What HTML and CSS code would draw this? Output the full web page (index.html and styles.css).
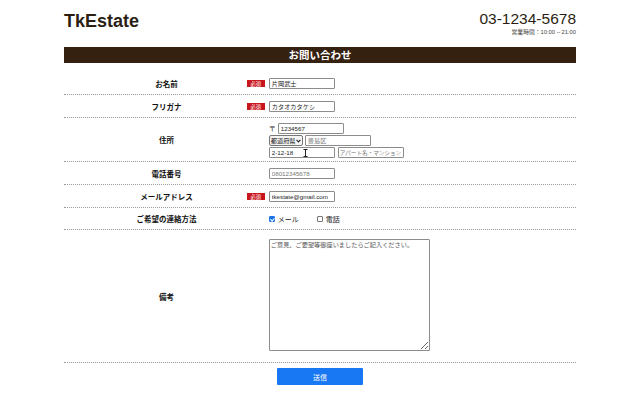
FILE: index.html
```html
<!DOCTYPE html>
<html lang="ja">
<head>
<meta charset="utf-8">
<title>TkEstate お問い合わせ</title>
<link rel="stylesheet" href="styles.css">
</head>
<body>
<div class="container">
  <header class="header">
    <div class="logo">TkEstate</div>
    <div class="contact">
      <div class="tel">03-1234-5678</div>
      <div class="hours">営業時間：10:00 – 21:00</div>
    </div>
  </header>
  <h1 class="title">お問い合わせ</h1>
  <form class="form">
    <div class="row">
      <div class="label"><span class="label-text">お名前</span><span class="badge">必須</span></div>
      <div class="field"><input class="input" type="text" value="片岡武士"></div>
    </div>
    <div class="row">
      <div class="label"><span class="label-text">フリガナ</span><span class="badge">必須</span></div>
      <div class="field"><input class="input" type="text" value="カタオカタケシ"></div>
    </div>
    <div class="row">
      <div class="label"><span class="label-text">住所</span></div>
      <div class="field field-address">
        <div class="line"><span class="postmark">〒</span><input class="input" type="text" value="1234567"></div>
        <div class="line">
          <span class="select-wrap">
            <select class="select"><option>都道府県</option></select>
            <svg class="chev" width="5" height="4" viewBox="0 0 5 4"><path d="M0.6 0.8L2.5 2.9L4.4 0.8" stroke="#222" stroke-width="1.1" fill="none"/></svg>
          </span>
          <input class="input" type="text" placeholder="豊島区">
        </div>
        <div class="line">
          <span class="cursor-wrap">
            <input class="input" type="text" value="2-12-18">
            <svg class="ibeam" width="5" height="8" viewBox="0 0 5 8"><path d="M0.5 0.5h4M2.5 0.5v7M0.5 7.5h4" stroke="#222" stroke-width="1" fill="none"/></svg>
          </span>
          <input class="input input-tight" type="text" placeholder="アパート名・マンション">
        </div>
      </div>
    </div>
    <div class="row">
      <div class="label"><span class="label-text">電話番号</span></div>
      <div class="field"><input class="input" type="text" placeholder="08012345678"></div>
    </div>
    <div class="row">
      <div class="label"><span class="label-text">メールアドレス</span><span class="badge">必須</span></div>
      <div class="field"><input class="input" type="text" value="tkestate@gmail.com"></div>
    </div>
    <div class="row">
      <div class="label"><span class="label-text">ご希望の連絡方法</span></div>
      <div class="field field-check">
        <label class="check"><input class="box" type="checkbox" checked>メール</label>
        <label class="check"><input class="box" type="checkbox">電話</label>
      </div>
    </div>
    <div class="row">
      <div class="label"><span class="label-text">備考</span></div>
      <div class="field field-note"><textarea class="textarea" placeholder="ご意見、ご要望等御座いましたらご記入ください。"></textarea></div>
    </div>
    <div class="actions"><button type="button" class="submit">送信</button></div>
  </form>
</div>
</body>
</html>
```

FILE: styles.css
```css
* { box-sizing: border-box; }
body {
  margin: 0;
  background: #fff;
  color: #222;
  font-family: "Liberation Sans", "Noto Sans CJK JP", sans-serif;
}
.container {
  width: 512px;
  margin: 0 auto;
}
.header {
  height: 47px;
  display: flex;
  justify-content: space-between;
  align-items: flex-start;
}
.logo {
  padding-top: 12px;
  font-size: 18px;
  line-height: 18px;
  font-weight: bold;
  color: #2b1e12;
}
.contact {
  padding-top: 11px;
  display: flex;
  flex-direction: column;
  align-items: flex-end;
}
.tel {
  font-size: 15.5px;
  line-height: 16px;
  color: #2b1e12;
}
.hours {
  margin-top: 2px;
  font-size: 5.8px;
  line-height: 7px;
  color: #444;
}
.title {
  margin: 0;
  height: 16px;
  line-height: 16px;
  background: #35210f;
  color: #fff;
  text-align: center;
  font-size: 10.5px;
  font-weight: bold;
  font-family: "Noto Sans CJK JP", sans-serif;
}
.form {
  margin-top: 9px;
}
.row {
  display: grid;
  grid-template-columns: 40% 1fr;
  border-bottom: 1px dotted #9a9a9a;
}
.label {
  display: grid;
  grid-template-columns: 1fr auto 1fr;
  align-items: center;
}
.label-text {
  grid-column: 2;
  font-size: 7.5px;
  line-height: 9px;
  font-weight: bold;
  color: #111;
  white-space: nowrap;
  font-family: "Noto Sans CJK JP", sans-serif;
}
.badge {
  grid-column: 3;
  justify-self: end;
  margin-right: 4px;
  width: 18px;
  height: 7px;
  line-height: 7px;
  background: #c9161d;
  color: #fff;
  font-size: 5.2px;
  text-align: center;
  font-family: "Noto Sans CJK JP", sans-serif;
}
.field {
  padding: 6px 0 5px;
  display: flex;
  align-items: center;
}
.input {
  width: 66px;
  height: 11px;
  margin: 0;
  padding: 0 1px 0 2px;
  border: 1px solid #8c8c8c;
  border-radius: 1px;
  font-size: 6.2px;
  line-height: 9px;
  color: #222;
  font-family: "Liberation Sans", "Noto Sans CJK JP", sans-serif;
  background: #fff;
}
.input-tight {
  font-size: 5.6px;
  padding: 0 1px;
}
.input::placeholder { color: #777; }
.field-address {
  flex-direction: column;
  align-items: flex-start;
  gap: 1px;
  padding: 5px 0 3px;
}
.line {
  display: flex;
  align-items: center;
  gap: 3px;
}
.postmark {
  font-size: 7px;
  line-height: 9px;
  width: 6px;
  font-family: "Noto Sans CJK JP", sans-serif;
}
.select-wrap {
  position: relative;
  display: inline-flex;
  margin-right: -1px;
}
.select {
  appearance: none;
  -webkit-appearance: none;
  width: 34px;
  height: 11px;
  margin: 0;
  padding: 0 0 0 1px;
  border: 1px solid #777;
  border-radius: 2px;
  font-size: 6.2px;
  color: #111;
  background: #f4f4f4;
  font-family: "Noto Sans CJK JP", sans-serif;
}
.chev {
  position: absolute;
  right: 2px;
  top: 4px;
  pointer-events: none;
}
.cursor-wrap {
  position: relative;
  display: inline-flex;
}
.ibeam {
  position: absolute;
  left: 34px;
  top: 2px;
}
.field-check {
  padding: 6px 0 5px;
}
.check {
  display: inline-flex;
  align-items: center;
  font-size: 7px;
  line-height: 10px;
  color: #222;
  margin-right: 18px;
  font-family: "Noto Sans CJK JP", sans-serif;
}
.box {
  appearance: none;
  -webkit-appearance: none;
  position: relative;
  width: 6px;
  height: 6px;
  margin: 0 3px 0 0;
  border: 1px solid #777;
  border-radius: 1px;
  background: #fff;
}
.box:checked {
  background: #1a73e8;
  border-color: #1a73e8;
}
.box:checked::after {
  content: "";
  position: absolute;
  left: 1px;
  top: 0;
  width: 1.5px;
  height: 3px;
  border: solid #fff;
  border-width: 0 1px 1px 0;
  transform: rotate(45deg);
}
.field-note {
  padding: 9px 0 11px;
}
.textarea {
  width: 161px;
  height: 112px;
  margin: 0;
  padding: 1px 1px;
  border: 1px solid #8c8c8c;
  border-radius: 1px;
  font-size: 6.2px;
  line-height: 8px;
  font-family: "Noto Sans CJK JP", sans-serif;
  resize: both;
}
.textarea::placeholder { color: #555; }
.actions {
  display: flex;
  justify-content: center;
  padding-top: 5px;
}
.submit {
  width: 86px;
  height: 17px;
  border: none;
  border-radius: 1px;
  background: #1877f2;
  color: #fff;
  font-size: 7px;
  font-family: "Noto Sans CJK JP", sans-serif;
  padding: 0;
}
```
